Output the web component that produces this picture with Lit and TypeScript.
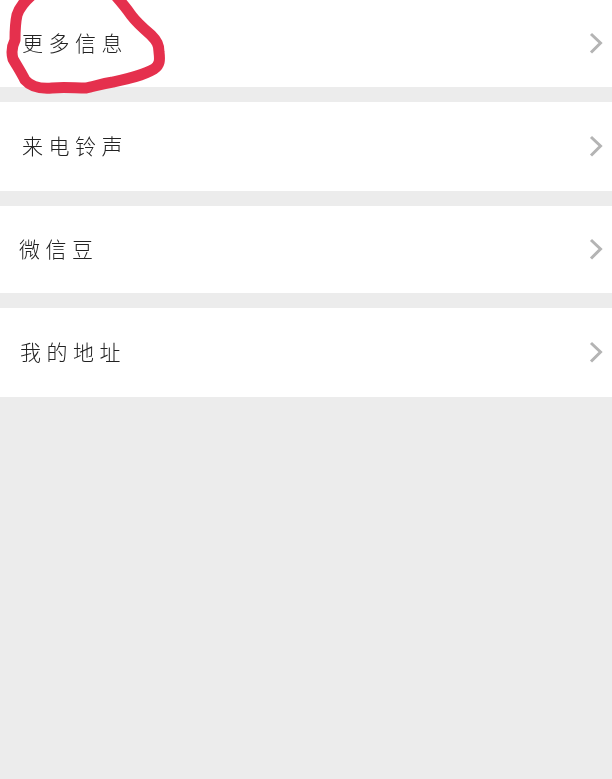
import { LitElement, html, css } from "lit";
import { customElement } from "lit/decorators.js";

const rows = [
  { label: "更多信息", cls: "r1" },
  { label: "来电铃声", cls: "r2" },
  { label: "微信豆", cls: "r3" },
  { label: "我的地址", cls: "r4" },
];

@customElement("app-root")
export class AppRoot extends LitElement {
  static styles = css`
    :host {
      display: block;
      position: relative;
      height: 779px;
      overflow: hidden;
      background: #ececec;
      font-family: "Noto Sans CJK SC", "Noto Sans CJK JP", sans-serif;
    }
    .list {
      display: flex;
      flex-direction: column;
      gap: 15px;
    }
    .row {
      box-sizing: border-box;
      display: flex;
      align-items: center;
      justify-content: space-between;
      background: #fff;
      padding-right: 9px;
      padding-bottom: 2px;
    }
    .r1 { height: 87px; padding-left: 22px; }
    .r2 { height: 89px; padding-left: 22px; }
    .r3 { height: 87px; padding-left: 19px; }
    .r4 { height: 89px; padding-left: 20px; }
    .label {
      font-size: 21px;
      font-weight: 300;
      letter-spacing: 5.5px;
      color: #222;
      line-height: 28px;
      margin-bottom: 2px;
      filter: blur(0.3px);
    }
    .chev {
      width: 14px;
      height: 22px;
      fill: none;
      stroke: #b4b4b4;
      stroke-width: 3;
    }
    .mark {
      position: absolute;
      left: 0;
      top: 0;
      width: 170px;
      height: 100px;
      fill: none;
      stroke: #e5304d;
      stroke-width: 11;
      stroke-linecap: round;
      stroke-linejoin: round;
    }
  `;

  render() {
    return html`
      <div class="list">
        ${rows.map(
          (r) => html`
            <div class="row ${r.cls}">
              <span class="label">${r.label}</span>
              <svg class="chev" viewBox="0 0 14 22">
                <path d="M2 2 L11.5 11 L2 20.5" />
              </svg>
            </div>
          `
        )}
      </div>
      <svg class="mark" viewBox="0 0 170 100">
        <path
          d="M32 -5 C25 1 20 6 17 15 C15 24 15 33 15 40 C12 46 11 52 13 59 C17 66 21 72 25 80 C31 87 40 89 52 88 C63 87 75 88 86 88 C93 87 100 84 113 82 C127 79 142 76 154 69 C160 65 160 60 159 52 C159 45 157 41 151 35 C144 29 137 23 131 15 C127 9 122 3 115 -5"
        />
      </svg>
    `;
  }
}
